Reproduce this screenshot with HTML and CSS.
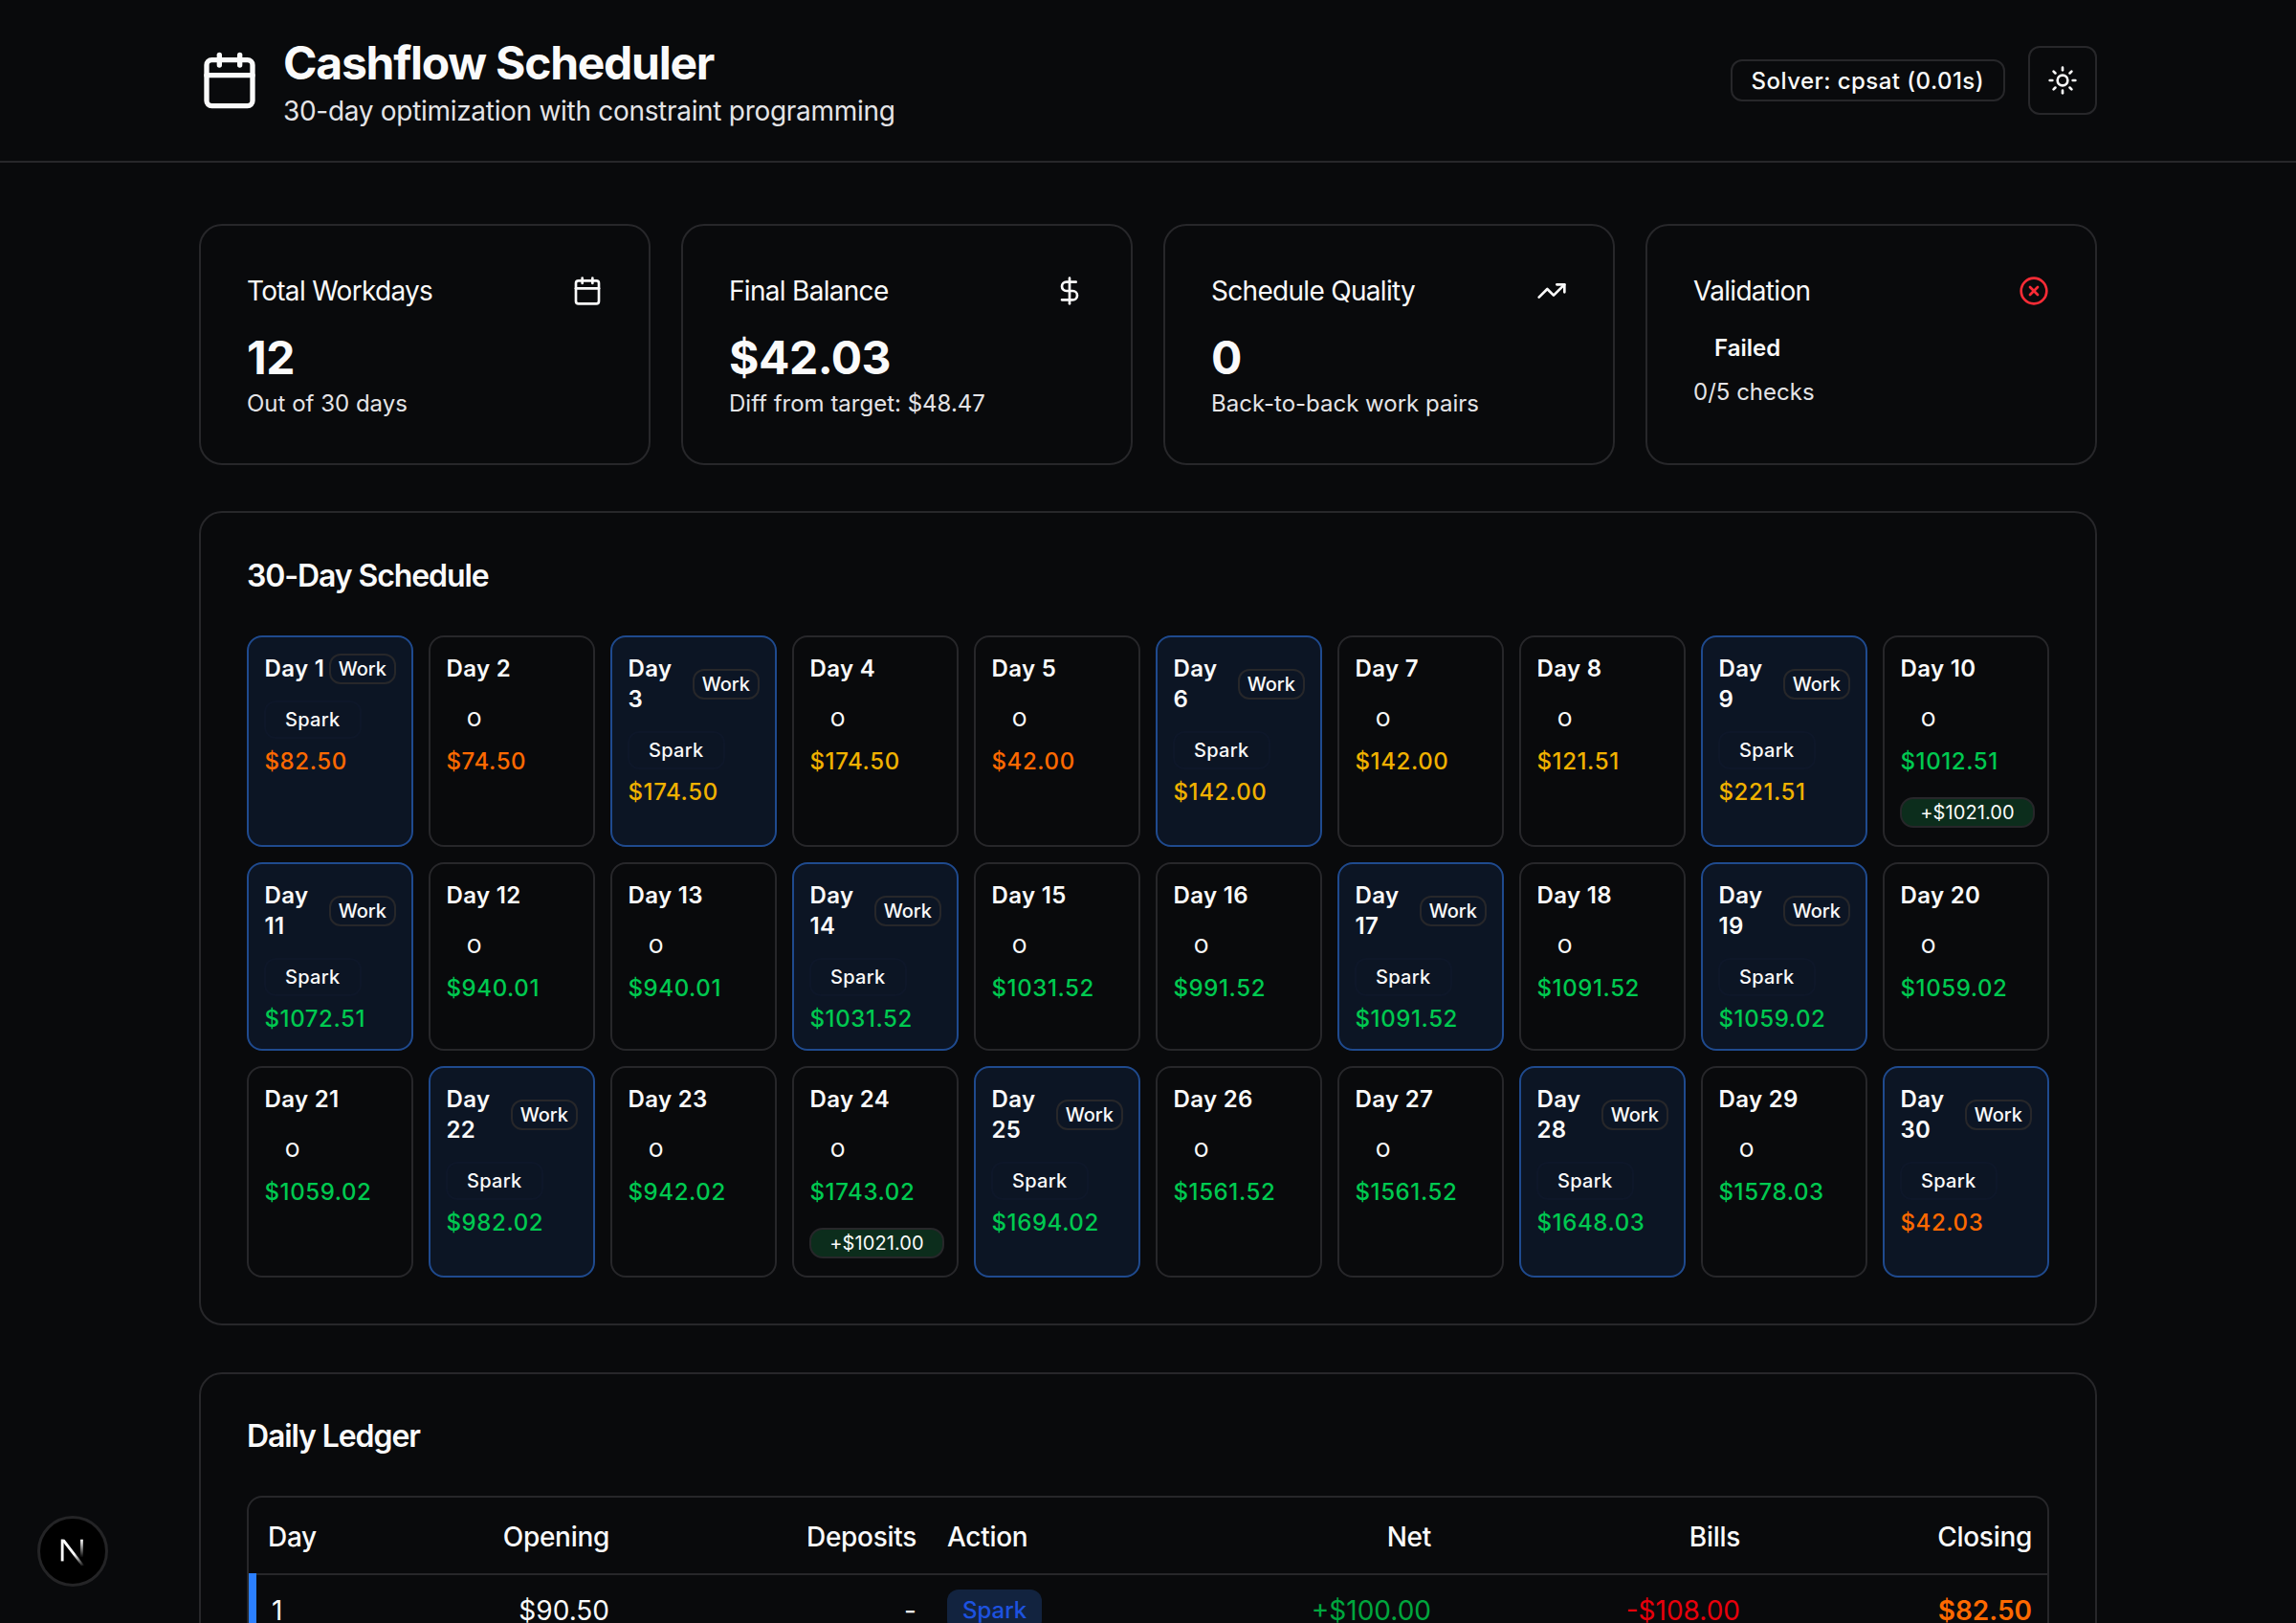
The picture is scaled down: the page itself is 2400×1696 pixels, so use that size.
FILE: index.html
```html
<!DOCTYPE html>
<html lang="en">
<head>
<meta charset="utf-8">
<title>Cashflow Scheduler</title>
<link rel="stylesheet" href="styles.css">
</head>
<body>
<header class="topbar">
  <div class="container topbar-inner">
    <div class="brand">
      <svg class="icon logo" viewBox="0 0 24 24"><path d="M8 2v4"/><path d="M16 2v4"/><rect x="3" y="4" width="18" height="18" rx="2"/><path d="M3 10h18"/></svg>
      <div>
        <h1 class="title">Cashflow Scheduler</h1>
        <p class="subtitle">30-day optimization with constraint programming</p>
      </div>
    </div>
    <div class="actions">
      <span class="solver">Solver: cpsat (0.01s)</span>
      <button class="theme" type="button" aria-label="Toggle theme">
        <svg class="icon i32" viewBox="0 0 24 24"><circle cx="12" cy="12" r="4"/><path d="M12 2v2"/><path d="M12 20v2"/><path d="m4.93 4.93 1.41 1.41"/><path d="m17.66 17.66 1.41 1.41"/><path d="M2 12h2"/><path d="M20 12h2"/><path d="m6.34 17.66-1.41 1.41"/><path d="m19.07 4.93-1.41 1.41"/></svg>
      </button>
    </div>
  </div>
</header>

<main class="container main">
  <section class="stats">
    <article class="stat">
      <div class="stat-head"><span>Total Workdays</span><svg class="icon i32" viewBox="0 0 24 24"><path d="M8 2v4"/><path d="M16 2v4"/><rect x="3" y="4" width="18" height="18" rx="2"/><path d="M3 10h18"/></svg></div>
      <div class="stat-value">12</div>
      <div class="stat-sub">Out of 30 days</div>
    </article>
    <article class="stat">
      <div class="stat-head"><span>Final Balance</span><svg class="icon i32" viewBox="0 0 24 24"><line x1="12" x2="12" y1="2" y2="22"/><path d="M17 5H9.5a3.5 3.5 0 0 0 0 7h5a3.5 3.5 0 0 1 0 7H6"/></svg></div>
      <div class="stat-value">$42.03</div>
      <div class="stat-sub">Diff from target: $48.47</div>
    </article>
    <article class="stat">
      <div class="stat-head"><span>Schedule Quality</span><svg class="icon i32" viewBox="0 0 24 24"><polyline points="22 7 13.5 15.5 8.5 10.5 2 17"/><polyline points="16 7 22 7 22 13"/></svg></div>
      <div class="stat-value">0</div>
      <div class="stat-sub">Back-to-back work pairs</div>
    </article>
    <article class="stat">
      <div class="stat-head"><span>Validation</span><svg class="icon i32 danger" viewBox="0 0 24 24"><circle cx="12" cy="12" r="10"/><path d="m15 9-6 6"/><path d="m9 9 6 6"/></svg></div>
      <span class="status">Failed</span>
      <div class="stat-sub checks">0/5 checks</div>
    </article>
  </section>

  <section class="panel">
    <h2 class="panel-title">30-Day Schedule</h2>
    <div class="days">
      <div class="day work"><div class="day-head"><span class="day-name">Day 1</span><span class="tag">Work</span></div><span class="action">Spark</span><div class="bal orange">$82.50</div></div>
      <div class="day"><div class="day-head"><span class="day-name">Day 2</span></div><span class="action">O</span><div class="bal orange">$74.50</div></div>
      <div class="day work"><div class="day-head"><span class="day-name">Day 3</span><span class="tag">Work</span></div><span class="action">Spark</span><div class="bal yellow">$174.50</div></div>
      <div class="day"><div class="day-head"><span class="day-name">Day 4</span></div><span class="action">O</span><div class="bal yellow">$174.50</div></div>
      <div class="day"><div class="day-head"><span class="day-name">Day 5</span></div><span class="action">O</span><div class="bal orange">$42.00</div></div>
      <div class="day work"><div class="day-head"><span class="day-name">Day 6</span><span class="tag">Work</span></div><span class="action">Spark</span><div class="bal yellow">$142.00</div></div>
      <div class="day"><div class="day-head"><span class="day-name">Day 7</span></div><span class="action">O</span><div class="bal yellow">$142.00</div></div>
      <div class="day"><div class="day-head"><span class="day-name">Day 8</span></div><span class="action">O</span><div class="bal yellow">$121.51</div></div>
      <div class="day work"><div class="day-head"><span class="day-name">Day 9</span><span class="tag">Work</span></div><span class="action">Spark</span><div class="bal yellow">$221.51</div></div>
      <div class="day"><div class="day-head"><span class="day-name">Day 10</span></div><span class="action">O</span><div class="bal green">$1012.51</div><div class="deposit">+$1021.00</div></div>

      <div class="day work"><div class="day-head"><span class="day-name">Day 11</span><span class="tag">Work</span></div><span class="action">Spark</span><div class="bal green">$1072.51</div></div>
      <div class="day"><div class="day-head"><span class="day-name">Day 12</span></div><span class="action">O</span><div class="bal green">$940.01</div></div>
      <div class="day"><div class="day-head"><span class="day-name">Day 13</span></div><span class="action">O</span><div class="bal green">$940.01</div></div>
      <div class="day work"><div class="day-head"><span class="day-name">Day 14</span><span class="tag">Work</span></div><span class="action">Spark</span><div class="bal green">$1031.52</div></div>
      <div class="day"><div class="day-head"><span class="day-name">Day 15</span></div><span class="action">O</span><div class="bal green">$1031.52</div></div>
      <div class="day"><div class="day-head"><span class="day-name">Day 16</span></div><span class="action">O</span><div class="bal green">$991.52</div></div>
      <div class="day work"><div class="day-head"><span class="day-name">Day 17</span><span class="tag">Work</span></div><span class="action">Spark</span><div class="bal green">$1091.52</div></div>
      <div class="day"><div class="day-head"><span class="day-name">Day 18</span></div><span class="action">O</span><div class="bal green">$1091.52</div></div>
      <div class="day work"><div class="day-head"><span class="day-name">Day 19</span><span class="tag">Work</span></div><span class="action">Spark</span><div class="bal green">$1059.02</div></div>
      <div class="day"><div class="day-head"><span class="day-name">Day 20</span></div><span class="action">O</span><div class="bal green">$1059.02</div></div>

      <div class="day"><div class="day-head"><span class="day-name">Day 21</span></div><span class="action">O</span><div class="bal green">$1059.02</div></div>
      <div class="day work"><div class="day-head"><span class="day-name">Day 22</span><span class="tag">Work</span></div><span class="action">Spark</span><div class="bal green">$982.02</div></div>
      <div class="day"><div class="day-head"><span class="day-name">Day 23</span></div><span class="action">O</span><div class="bal green">$942.02</div></div>
      <div class="day"><div class="day-head"><span class="day-name">Day 24</span></div><span class="action">O</span><div class="bal green">$1743.02</div><div class="deposit">+$1021.00</div></div>
      <div class="day work"><div class="day-head"><span class="day-name">Day 25</span><span class="tag">Work</span></div><span class="action">Spark</span><div class="bal green">$1694.02</div></div>
      <div class="day"><div class="day-head"><span class="day-name">Day 26</span></div><span class="action">O</span><div class="bal green">$1561.52</div></div>
      <div class="day"><div class="day-head"><span class="day-name">Day 27</span></div><span class="action">O</span><div class="bal green">$1561.52</div></div>
      <div class="day work"><div class="day-head"><span class="day-name">Day 28</span><span class="tag">Work</span></div><span class="action">Spark</span><div class="bal green">$1648.03</div></div>
      <div class="day"><div class="day-head"><span class="day-name">Day 29</span></div><span class="action">O</span><div class="bal green">$1578.03</div></div>
      <div class="day work"><div class="day-head"><span class="day-name">Day 30</span><span class="tag">Work</span></div><span class="action">Spark</span><div class="bal orange">$42.03</div></div>
    </div>
  </section>

  <section class="panel ledger">
    <h2 class="panel-title">Daily Ledger</h2>
    <div class="table-wrap">
      <table class="table">
        <colgroup><col class="c-day"><col class="c-open"><col class="c-dep"><col class="c-act"><col class="c-net"><col class="c-bills"><col class="c-close"></colgroup>
        <thead>
          <tr><th class="left first">Day</th><th>Opening</th><th>Deposits</th><th class="left">Action</th><th>Net</th><th>Bills</th><th>Closing</th></tr>
        </thead>
        <tbody>
          <tr class="work-row">
            <td class="left first day-num">1</td><td>$90.50</td><td>-</td><td class="left"><span class="pill">Spark</span></td><td class="net">+$100.00</td><td class="bills">-$108.00</td><td class="orange closing">$82.50</td>
          </tr>
        </tbody>
      </table>
    </div>
  </section>
</main>

<div class="dev-badge">
  <svg class="dev-mark" viewBox="0 0 72 72">
    <defs>
      <linearGradient id="nd" x1="0" y1="0" x2="1" y2="1"><stop offset="0.55" stop-color="#fff"/><stop offset="1" stop-color="#fff" stop-opacity="0"/></linearGradient>
      <linearGradient id="nr" x1="0" y1="0" x2="0" y2="1"><stop offset="0" stop-color="#fff"/><stop offset="1" stop-color="#fff" stop-opacity="0"/></linearGradient>
    </defs>
    <rect x="23" y="23" width="3" height="24" fill="#fff"/>
    <polygon points="23,23 27,23 49,52 45.500,52" fill="url(#nd)"/>
    <rect x="44.500" y="23" width="3" height="20" fill="url(#nr)"/>
  </svg>
</div>
</body>
</html>
```
FILE: styles.css
```css
* { box-sizing: border-box; }
html, body { margin: 0; height: 100%; overflow: hidden; }
body {
  background: #090a0c;
  color: #fafafa;
  font-family: Inter, "Liberation Sans", sans-serif;
  font-size: 28px;
  line-height: 40px;
}
h1, h2, p { margin: 0; }
.container { width: 1984px; margin: 0 auto; }

.icon { display: block; fill: none; stroke: currentColor; stroke-width: 2; stroke-linecap: round; stroke-linejoin: round; flex: none; }
.i32 { width: 32px; height: 32px; }
.logo { width: 64px; height: 64px; }
.danger { color: #fb2c36; }

.topbar { border-bottom: 2px solid #27272a; height: 170px; }
.topbar-inner { display: flex; align-items: center; justify-content: space-between; height: 168px; }
.brand { display: flex; align-items: center; gap: 24px; }
.title { font-size: 48px; line-height: 64px; font-weight: 700; letter-spacing: -1.25px; padding-top: 2px; margin-bottom: -2px; }
.subtitle { font-size: 28px; line-height: 40px; color: #e4e4e7; letter-spacing: -0.3px; }
.actions { display: flex; align-items: center; gap: 24px; }
.solver { border: 2px solid #27272a; border-radius: 12px; padding: 5px 20px 3px; font-size: 24px; line-height: 32px; font-weight: 500; letter-spacing: 0.45px; }
.theme { width: 72px; height: 72px; background: transparent; border: 2px solid #27272a; border-radius: 12px; color: #fafafa; display: flex; align-items: center; justify-content: center; padding: 0; }

.main { padding-top: 64px; }
.stats { display: grid; grid-template-columns: repeat(4, 1fr); gap: 32px; }
.stat { border: 2px solid #27272a; border-radius: 24px; padding: 48px; display: flex; flex-direction: column; align-items: stretch; height: 252px; }
.stat-head { display: flex; align-items: center; justify-content: space-between; height: 40px; margin-bottom: 16px; font-size: 28px; font-weight: 400; letter-spacing: -0.7px; }
.stat-value { font-size: 48px; line-height: 64px; font-weight: 700; letter-spacing: -0.5px; padding-top: 2px; margin-bottom: -2px; }
.stat-sub { font-size: 24px; line-height: 32px; color: #e4e4e7; padding-top: 1.5px; margin-bottom: -1.5px; }
.status { align-self: flex-start; border: 2px solid transparent; padding: 5.5px 20px 2.5px; font-size: 24px; line-height: 32px; font-weight: 600; }
.checks { margin-top: 8px; }

.panel { border: 2px solid #27272a; border-radius: 24px; padding: 48px; margin-top: 48px; }
.panel-title { font-size: 32px; line-height: 32px; font-weight: 600; margin-bottom: 48px; letter-spacing: -1.1px; padding-top: 1.500px; height: 32px; }

.days { display: grid; grid-template-columns: repeat(10, 1fr); column-gap: 16px; row-gap: 16.5px; }
.day { border: 2px solid #27272a; border-radius: 16px; padding: 16px 16px 14.5px; display: flex; flex-direction: column; align-items: flex-start; min-width: 0; }
.day.work { background: #0c1524; border-color: #1f4a8e; }
.day-head { display: flex; align-items: center; justify-content: space-between; gap: 3px; width: 100%; padding-top: 1px; margin-bottom: -1px; }
.day-name { font-size: 24px; line-height: 32px; font-weight: 600; letter-spacing: 0.35px; padding-left: 0.5px; }
.tag { border: 2px solid #27272a; border-radius: 12px; padding: 0 8px; font-size: 20px; line-height: 28px; font-weight: 500; flex: none; }
.action { margin-top: 18px; border: 2px solid transparent; border-radius: 12px; padding: 4px 20px; font-size: 20px; line-height: 28px; font-weight: 500; letter-spacing: 0.3px; }
.work .action { border-color: #0e1729; }
.bal { margin-top: 8px; font-size: 24px; line-height: 32px; font-weight: 500; letter-spacing: 0.6px; padding-left: 0.5px; }
.deposit { align-self: stretch; margin: 20.5px -3px 3.5px 0; height: 32px; background: #0c2d1c; border: 2px solid #27272a; border-radius: 14px; text-align: center; font-size: 20px; line-height: 28px; font-weight: 400; letter-spacing: 0.1px; }

.orange { color: #ff6900; }
.yellow { color: #f0b100; }
.green { color: #00c950; }

.ledger { margin-top: 49px; }
.ledger .panel-title { margin-bottom: 47px; }
.table-wrap { border: 2px solid #27272a; border-radius: 16px 16px 0 0; }
.table { width: 100%; border-collapse: collapse; table-layout: fixed; }
.c-day { width: 120px; } .c-open { width: 273px; } .c-dep { width: 321px; } .c-act { width: 268px; }
.c-net { width: 270px; } .c-bills { width: 323px; } .c-close { width: 305px; }
th, td { text-align: right; padding: 0 16px; font-size: 28px; line-height: 40px; }
th { height: 80px; padding-top: 3px; font-weight: 500; letter-spacing: -0.3px; border-bottom: 2px solid #27272a; }
td { height: 76px; padding-top: 15px; padding-bottom: 16px; }
.left { text-align: left; }
th.first { padding-left: 20px; }
.work-row .first { position: relative; padding-left: 24px; }
.work-row .first::before { content: ""; position: absolute; left: 0; top: -2px; bottom: 0; width: 8px; background: #2b7fff; }
.pill { display: inline-block; background: #12233f; color: #1d52e0; border-radius: 12px; padding: 6px 16px; font-size: 24px; line-height: 32px; font-weight: 500; }
.net { color: #00a63e; }
.bills { color: #e7000b; }
.closing { font-weight: 600; }

.dev-badge { position: fixed; left: 39px; bottom: 38px; width: 74px; height: 74px; border-radius: 50%; background: #000; border: 3px solid #242426; }
.dev-mark { display: block; width: 100%; height: 100%; }
```
